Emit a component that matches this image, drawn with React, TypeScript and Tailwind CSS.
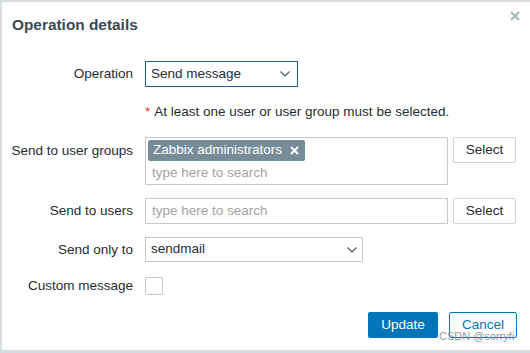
import React from "react";

function Chevron() {
  return (
    <svg width="10" height="6" viewBox="0 0 10 6" className="shrink-0">
      <path d="M0.5 0.5 L5 5 L9.5 0.5" fill="none" stroke="#4a5862" strokeWidth="1.1" />
    </svg>
  );
}

function Row({ label, top = false, className = "", children }: { label: string; top?: boolean; className?: string; children: React.ReactNode }) {
  return (
    <div className={`flex ${top ? "items-start" : "items-center"} ${className}`}>
      <div className={`w-[131px] shrink-0 text-right leading-[18px] text-[#1f2c33] ${top ? "pt-[5px]" : ""}`}>{label}</div>
      <div className="ml-[12px] flex items-start gap-[5px]">{children}</div>
    </div>
  );
}

function SelectButton() {
  return (
    <button className="w-[63px] h-[26px] rounded-[2px] border border-[#cfd5da] bg-white text-[#1f2c33] leading-none">
      Select
    </button>
  );
}

export default function App() {
  return (
    <div
      className="relative w-[530px] h-[353px] bg-[#d5dce1] pl-[2px] pt-[2px] overflow-hidden text-[13.5px]"
      style={{ fontFamily: '"Liberation Sans", Arial, sans-serif' }}
    >
      <div className="h-[348px] bg-white">
        {/* header */}
        <div className="flex h-[59px] items-start justify-between pl-[10px] pr-[10px]">
          <h2 className="pt-[13px] text-[15.4px] font-bold leading-[20px] text-[#3a4a55]">Operation details</h2>
          <svg width="10" height="10" viewBox="0 0 10 10" className="mt-[9px]">
            <path d="M1 1 L9 9 M9 1 L1 9" stroke="#aab4bb" strokeWidth="2" />
          </svg>
        </div>

        {/* form */}
        <Row label="Operation" className="h-[26px]">
          <div className="flex h-[26px] w-[153px] items-center justify-between border border-[#1f63a3] pl-[5px] pr-[7px] text-[#1f2c33]">
            <span>Send message</span>
            <Chevron />
          </div>
        </Row>

        <div className="mt-[16px] flex h-[18px] items-center pl-[143px] leading-[18px] text-[#1f2c33]">
          <span className="mr-[4px] text-[#e33734]">*</span>
          <span>At least one user or user group must be selected.</span>
        </div>

        <Row label="Send to user groups" top className="mt-[16px]">
          <div className="h-[48px] w-[303px] border border-[#c3c9ce] pl-[2px] pt-[2px]">
            <div className="flex h-[21px] w-[157px] items-center justify-between rounded-[2px] bg-[#768d99] pl-[5px] pr-[6px] text-white">
              <span>Zabbix administrators</span>
              <svg width="9" height="9" viewBox="0 0 9 9">
                <path d="M1 1 L8 8 M8 1 L1 8" stroke="#ffffff" strokeWidth="2" />
              </svg>
            </div>
            <div className="pl-[4px] pt-[2px] leading-[20px] text-[#a3a3a3]">type here to search</div>
          </div>
          <SelectButton />
        </Row>

        <Row label="Send to users" className="mt-[13px]">
          <div className="flex h-[26px] w-[303px] items-center border border-[#c3c9ce] pl-[6px] text-[#a3a3a3]">
            type here to search
          </div>
          <SelectButton />
        </Row>

        <Row label="Send only to" className="mt-[13px]">
          <div className="flex h-[25px] w-[218px] items-center justify-between border border-[#c3c9ce] pl-[5px] pr-[5px] text-[#1f2c33]">
            <span>sendmail</span>
            <Chevron />
          </div>
        </Row>

        <Row label="Custom message" className="mt-[15px]">
          <div className="h-[18px] w-[18px] rounded-[2px] border border-[#c3c9ce] bg-white" />
        </Row>

        <div className="mt-[17px] flex justify-end gap-[11px] pr-[13px]">
          <button className="h-[26px] w-[70px] rounded-[2px] bg-[#0275b8] text-white leading-none">Update</button>
          <button className="h-[26px] w-[68px] rounded-[2px] border border-[#0275b8] bg-white text-[#0275b8] leading-none">Cancel</button>
        </div>
      </div>

      {/* watermark */}
      <div className="absolute left-[439px] top-[329px] text-[11px] leading-[14px] text-[#8c8c8c]/90">CSDN @sorryfi</div>
    </div>
  );
}
